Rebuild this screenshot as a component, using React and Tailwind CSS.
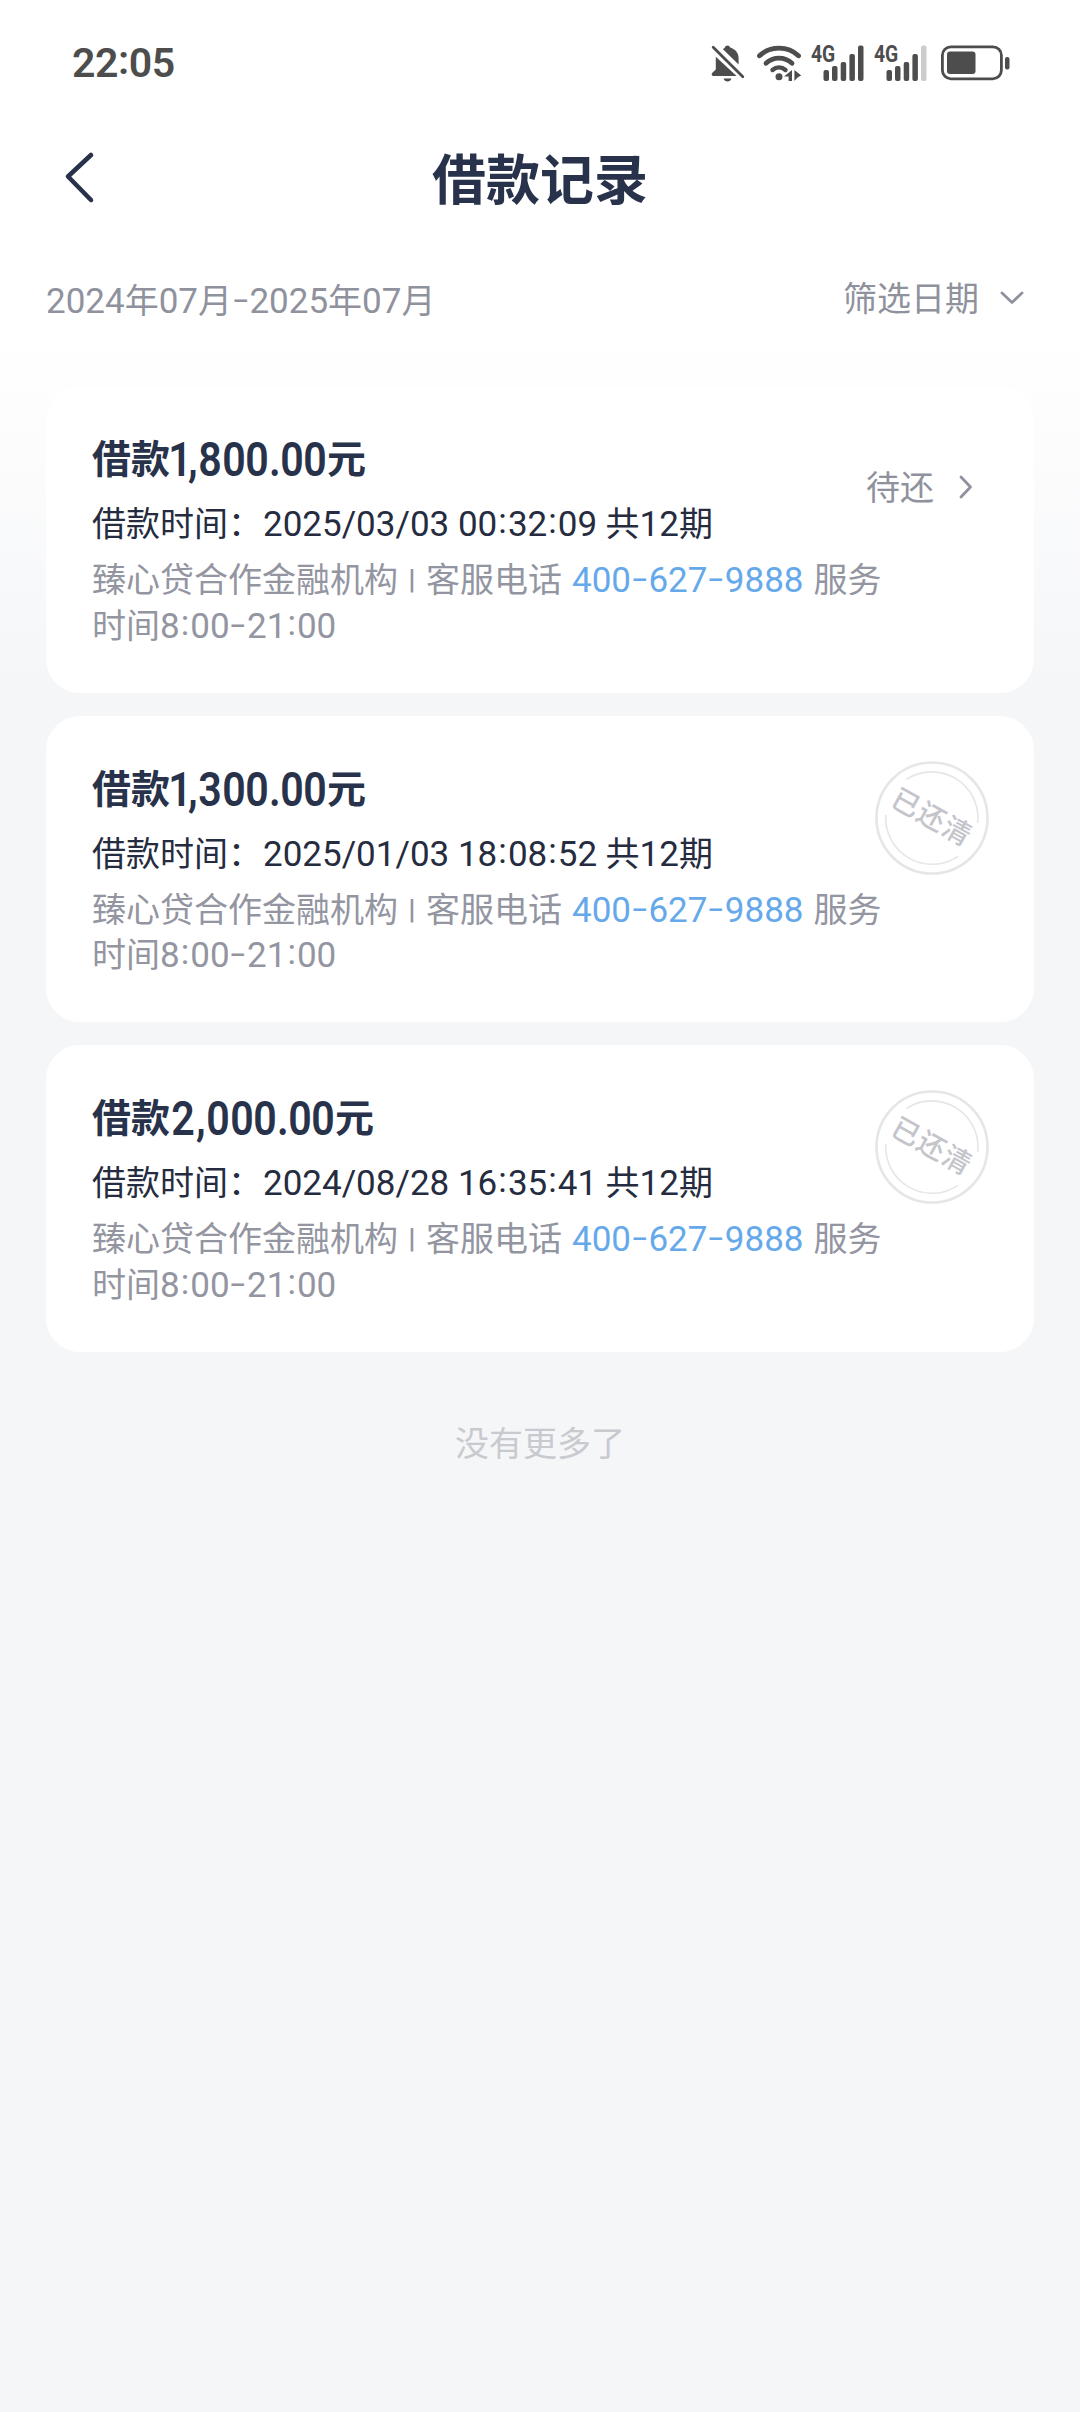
import React from "react";

const SERVICE_PHONE = "400-627-9888";

const RECORDS = [
  { id: 1, amount: "1,800.00", time: "2025/03/03 00:32:09", periods: 12, settled: false },
  { id: 2, amount: "1,300.00", time: "2025/01/03 18:08:52", periods: 12, settled: true },
  { id: 3, amount: "2,000.00", time: "2024/08/28 16:35:41", periods: 12, settled: true },
];

// Latin digits are a touch larger than the Chinese text, colons and dashes are wider
const Num = ({ children }) => (
  <span className="text-[35px]">
    {String(children)
      .split(/([:-])/)
      .map((part, i) => {
        if (part === ":") {
          return (
            <span key={i} className="inline-block w-[10.6px] text-center relative -top-[3px]">
              :
            </span>
          );
        }
        if (part === "-") {
          return (
            <span key={i} className="inline-block w-[17.4px] text-center relative -top-[2px]">
              <span className="inline-block scale-x-150">-</span>
            </span>
          );
        }
        return <span key={i}>{part}</span>;
      })}
  </span>
);

const Signal = ({ weak }) => (
  <div className="relative w-[53px] h-[36px]">
    <span className="absolute left-0 top-[1px] text-[23px] leading-[18px] font-bold origin-left scale-x-[0.84]">
      4G
    </span>
    <svg viewBox="0 0 53 36" className="w-full h-full" fill="#4d4d4d">
      <rect x="12.5" y="25" width="5.5" height="11" rx="2" />
      <rect x="21" y="21" width="5.5" height="15" rx="2" />
      <rect x="29.7" y="17" width="5.5" height="19" rx="2" />
      <rect x="38.4" y="9" width="5.5" height="27" rx="2" />
      <rect x="47" y="0.5" width="5.5" height="35.5" rx="2" fill={weak ? "#cccccc" : "#4d4d4d"} />
    </svg>
  </div>
);

const StatusBar = () => (
  <div className="h-[126px] pl-[72px] pr-[69px] flex items-center justify-between text-[#4d4d4d]">
    <div className="text-[41px] leading-none font-semibold tracking-[-0.5px] flex">
      22
      <span className="w-[11px] text-center relative -top-[3px]">:</span>
      05
    </div>
    <div className="flex items-center">
      <svg viewBox="0 0 34 38" className="w-[34px] h-[38px]" fill="#4d4d4d">
        <path d="M12 5.2C13 4.4 13.4 4.2 13.8 3.6C14.6 0.7 18.4 0.7 19.2 3.6C24.5 5.2 27.6 9.5 27.6 14V20.6Z" />
        <path d="M4.8 12.8L25.6 32H2.2C0.4 32 0.2 30 1.4 28.8L4.8 25.4Z" />
        <path d="M12.5 34.5H20.5C19.5 38.5 13.5 38.5 12.5 34.5Z" />
        <path d="M2.2 3.2L31.8 32.8" stroke="#4d4d4d" strokeWidth="2.8" strokeLinecap="round" />
      </svg>
      <svg viewBox="0 0 44 36" className="ml-[12px] w-[44px] h-[36px]" fill="none" stroke="#4d4d4d">
        <path d="M2.5 10.8C13 0.6 31 0.6 41.5 10.8" strokeWidth="4.8" strokeLinecap="round" />
        <path d="M9 18.3C16.3 11.4 27.7 11.4 35 18.3" strokeWidth="4.8" strokeLinecap="round" />
        <path d="M15.5 25C19.4 21.6 24.6 21.6 28.5 25" strokeWidth="4.4" strokeLinecap="round" />
        <circle cx="22" cy="31.8" r="3.5" fill="#4d4d4d" stroke="none" />
        <path d="M35 25V36H31.6V31.6H27ZM37.4 36V25L44.2 30.4L40.6 32.4Z" fill="#4d4d4d" stroke="none" />
      </svg>
      <div className="ml-[10px]">
        <Signal />
      </div>
      <div className="ml-[10px]">
        <Signal weak />
      </div>
      <svg viewBox="0 0 70 36" className="ml-[14px] w-[70px] h-[36px]" fill="none">
        <rect x="1.4" y="1.8" width="59" height="32" rx="8.5" stroke="#4d4d4d" strokeWidth="2.8" />
        <rect x="6" y="6.5" width="28.5" height="22.5" rx="3" fill="#4d4d4d" />
        <rect x="64" y="12" width="4.5" height="12.5" rx="2" fill="#4d4d4d" />
      </svg>
    </div>
  </div>
);

const Header = () => (
  <header className="relative h-[106px] pt-[5px] flex items-center justify-center">
    <svg viewBox="0 0 32 54" className="absolute left-[64px] top-[24px] w-[32px] h-[54px]" fill="none">
      <path d="M27 5L4 26.5L27 50" stroke="#28324a" strokeWidth="4.6" strokeLinecap="round" strokeLinejoin="round" />
    </svg>
    <h1 className="text-[54px] leading-none font-bold text-[#28324a]">借款记录</h1>
  </header>
);

const FilterBar = () => (
  <div className="h-[154px] pt-[42px] pl-[46px] pr-[56px] flex items-start justify-between text-[34px] leading-[50px] text-[#8f929c]">
    <div className="pt-[2px]">
      <Num>2024</Num>年<Num>07</Num>月<Num>-2025</Num>年<Num>07</Num>月
    </div>
    <div className="flex items-center">
      筛选日期
      <svg viewBox="0 0 24 14" className="ml-[21px] mb-[3px] w-[24px] h-[14px]" fill="none">
        <path d="M2 2L12 11.5L22 2" stroke="#8f929c" strokeWidth="2.8" strokeLinecap="round" strokeLinejoin="round" />
      </svg>
    </div>
  </div>
);

const SettledStamp = () => (
  <div className="absolute right-[45px] top-[45px] w-[114px] h-[114px] flex items-center justify-center">
    <svg viewBox="-57 -57 114 114" className="absolute inset-0 w-full h-full" fill="none" stroke="#e6e6e8">
      <circle r="55.5" strokeWidth="2.6" />
      <path d="M-25.7 -38.5A46.3 46.3 0 0 1 45.8 5" strokeWidth="1.6" />
      <path d="M-46.2 -3A46.3 46.3 0 0 0 26 38.3" strokeWidth="1.6" />
    </svg>
    <span className="relative rotate-[29deg] text-[28px] leading-none font-medium tracking-[1px] whitespace-nowrap text-[#c4c5cb]">
      已还清
    </span>
  </div>
);

const AMOUNT_CHAR_WIDTH = {
  ",": "w-[11.6px]",
  ".": "w-[12px]",
  1: "w-[17px] pl-[2px]",
  2: "w-[25px]",
};

const Amount = ({ value }) => (
  <span className="flex text-[49px] font-semibold">
    {value.split("").map((ch, i) => (
      <span key={i} className={`${AMOUNT_CHAR_WIDTH[ch] || "w-[23.3px]"} flex justify-center`}>
        <span className="scale-x-[0.84]">{ch}</span>
      </span>
    ))}
  </span>
);

const RecordCard = ({ record }) => (
  <div className="relative h-[306.6px] rounded-[34px] bg-white pt-[44px] px-[46px]">
    <h2 className="flex items-center h-[60px] text-[39px] leading-[60px] font-bold text-[#28324a]">
      借款
      <Amount value={record.amount} />元
    </h2>
    <p className="mt-[9px] text-[34px] leading-[50px] text-[#262c40] whitespace-nowrap">
      借款时间：
      <span className="ml-[1px]">
        <Num>{record.time}</Num>
      </span>{" "}
      共<Num>{record.periods}</Num>期
    </p>
    <div className="mt-[8px] text-[34px] leading-[45.5px] text-[#9395a1] whitespace-nowrap">
      <p>
        臻心贷合作金融机构
        <span className="inline-block w-[28px] text-center relative -top-[1px] scale-y-[0.82]">|</span>
        客服电话
        <span className="ml-[10px] mr-[10px] text-[#66a9ea]">
          <Num>{SERVICE_PHONE}</Num>
        </span>
        服务
      </p>
      <p>
        时间<Num>8:00-21:00</Num>
      </p>
    </div>
    {record.settled ? (
      <SettledStamp />
    ) : (
      <div className="absolute right-[61px] top-[77px] flex items-center text-[34px] leading-[50px] text-[#8f929c]">
        待还
        <svg viewBox="0 0 14 24" className="ml-[25px] mb-[3px] w-[14px] h-[24px]" fill="none">
          <path d="M2 2L11.5 12L2 22" stroke="#8f929c" strokeWidth="2.8" strokeLinecap="round" strokeLinejoin="round" />
        </svg>
      </div>
    )}
  </div>
);

const App = () => {
  return (
    <div className="w-[1080px] h-[2412px] overflow-hidden bg-[linear-gradient(to_bottom,#ffffff_330px,#f5f6f8_690px)] font-[Roboto,'Noto_Sans_CJK_SC',sans-serif]">
      <StatusBar />
      <Header />
      <FilterBar />
      <main className="px-[46px] flex flex-col gap-[23px]">
        {RECORDS.map((record) => (
          <RecordCard key={record.id} record={record} />
        ))}
      </main>
      <p className="mt-[67px] text-center text-[34px] leading-[50px] text-[#c9cacf]">没有更多了</p>
    </div>
  );
};

export default App;
